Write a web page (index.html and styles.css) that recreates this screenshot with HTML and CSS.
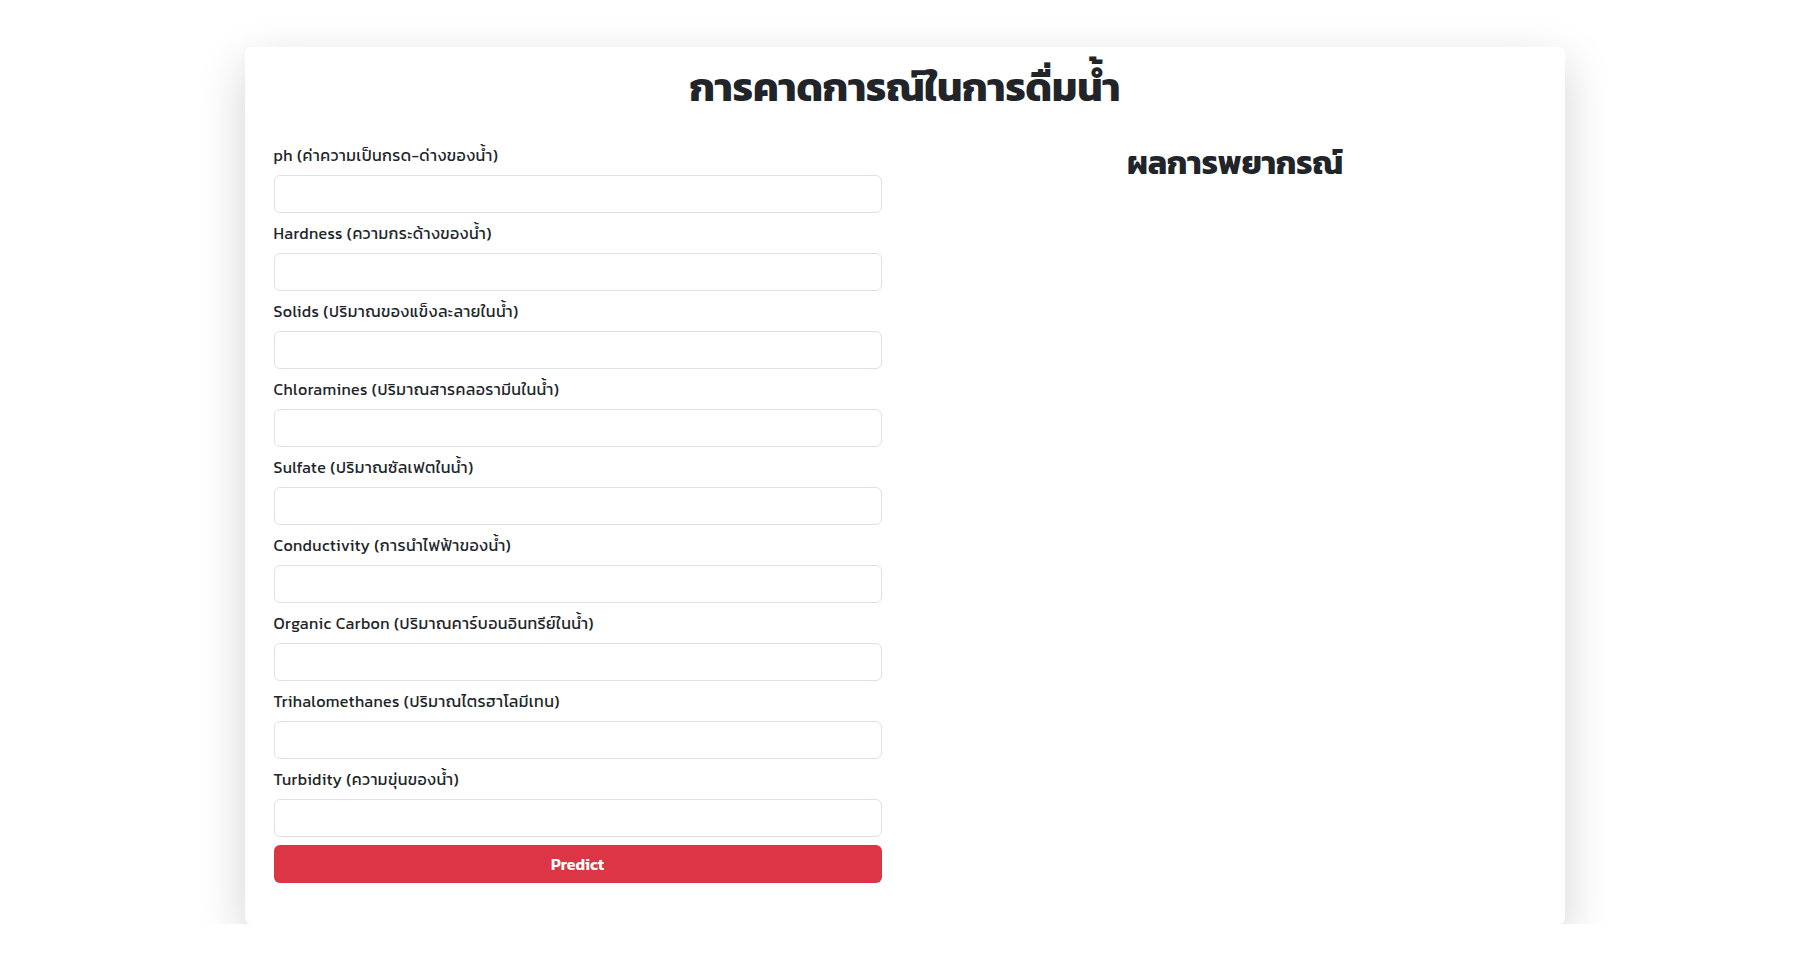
FILE: index.html
```html
<!DOCTYPE html>
<html lang="th">
<head>
<meta charset="utf-8">
<title>การคาดการณ์ในการดื่มน้ำ</title>
<link rel="stylesheet" href="styles.css">
</head>
<body>
<div class="card">
  <h1 class="title">การคาดการณ์ในการดื่มน้ำ</h1>
  <div class="layout">
    <form class="form">
      <div class="group"><label class="label">ph (ค่าความเป็นกรด-ด่างของน้ำ)</label><input class="input" type="text"></div>
      <div class="group"><label class="label">Hardness (ความกระด้างของน้ำ)</label><input class="input" type="text"></div>
      <div class="group"><label class="label">Solids (ปริมาณของแข็งละลายในน้ำ)</label><input class="input" type="text"></div>
      <div class="group"><label class="label">Chloramines (ปริมาณสารคลอรามีนในน้ำ)</label><input class="input" type="text"></div>
      <div class="group"><label class="label">Sulfate (ปริมาณซัลเฟตในน้ำ)</label><input class="input" type="text"></div>
      <div class="group"><label class="label">Conductivity (การนำไฟฟ้าของน้ำ)</label><input class="input" type="text"></div>
      <div class="group"><label class="label">Organic Carbon (ปริมาณคาร์บอนอินทรีย์ในน้ำ)</label><input class="input" type="text"></div>
      <div class="group"><label class="label">Trihalomethanes (ปริมาณไตรฮาโลมีเทน)</label><input class="input" type="text"></div>
      <div class="group"><label class="label">Turbidity (ความขุ่นของน้ำ)</label><input class="input" type="text"></div>
      <button class="btn" type="button">Predict</button>
    </form>
    <div class="result">
      <h2 class="result-title">ผลการพยากรณ์</h2>
    </div>
  </div>
</div>
</body>
</html>
```
FILE: styles.css
```css
* { box-sizing: border-box; }
body {
  margin: 0;
  background: #fff;
  color: #212529;
  font-family: "Kanit", "Noto Sans Thai", "Noto Sans", "Open Sans", sans-serif;
  font-size: 16px;
  line-height: 1.5;
}
.card {
  width: 1320px;
  margin: 47px auto 0;
  background: #fff;
  border-radius: 6px;
  box-shadow: 0 16px 48px rgba(0, 0, 0, 0.175);
  padding: 16px 28px 41px 29px;
}
.title {
  margin: 0;
  text-align: center;
  font-size: 40px;
  line-height: 48px;
  font-weight: 700;
}
.layout {
  display: grid;
  grid-template-columns: 608px 1fr;
  column-gap: 52px;
  margin-top: 32px;
}
.form {
  display: flex;
  flex-direction: column;
  gap: 8px;
}
.group {
  display: flex;
  flex-direction: column;
}
.label {
  font-size: 16px;
  line-height: 24px;
  font-weight: 400;
  letter-spacing: 0.4px;
  margin-bottom: 8px;
}
.input {
  height: 38px;
  border: 1px solid #dee2e6;
  border-radius: 6px;
  background: #fff;
  font: inherit;
  padding: 6px 12px;
}
.btn {
  height: 38px;
  border: 0;
  border-radius: 6px;
  background: #dc3545;
  color: #fff;
  font: inherit;
  font-weight: 600;
}
.result { text-align: center; }
.result-title {
  margin: 0;
  font-size: 32px;
  line-height: 38px;
  font-weight: 700;
  padding-top: 1px;
}
```
